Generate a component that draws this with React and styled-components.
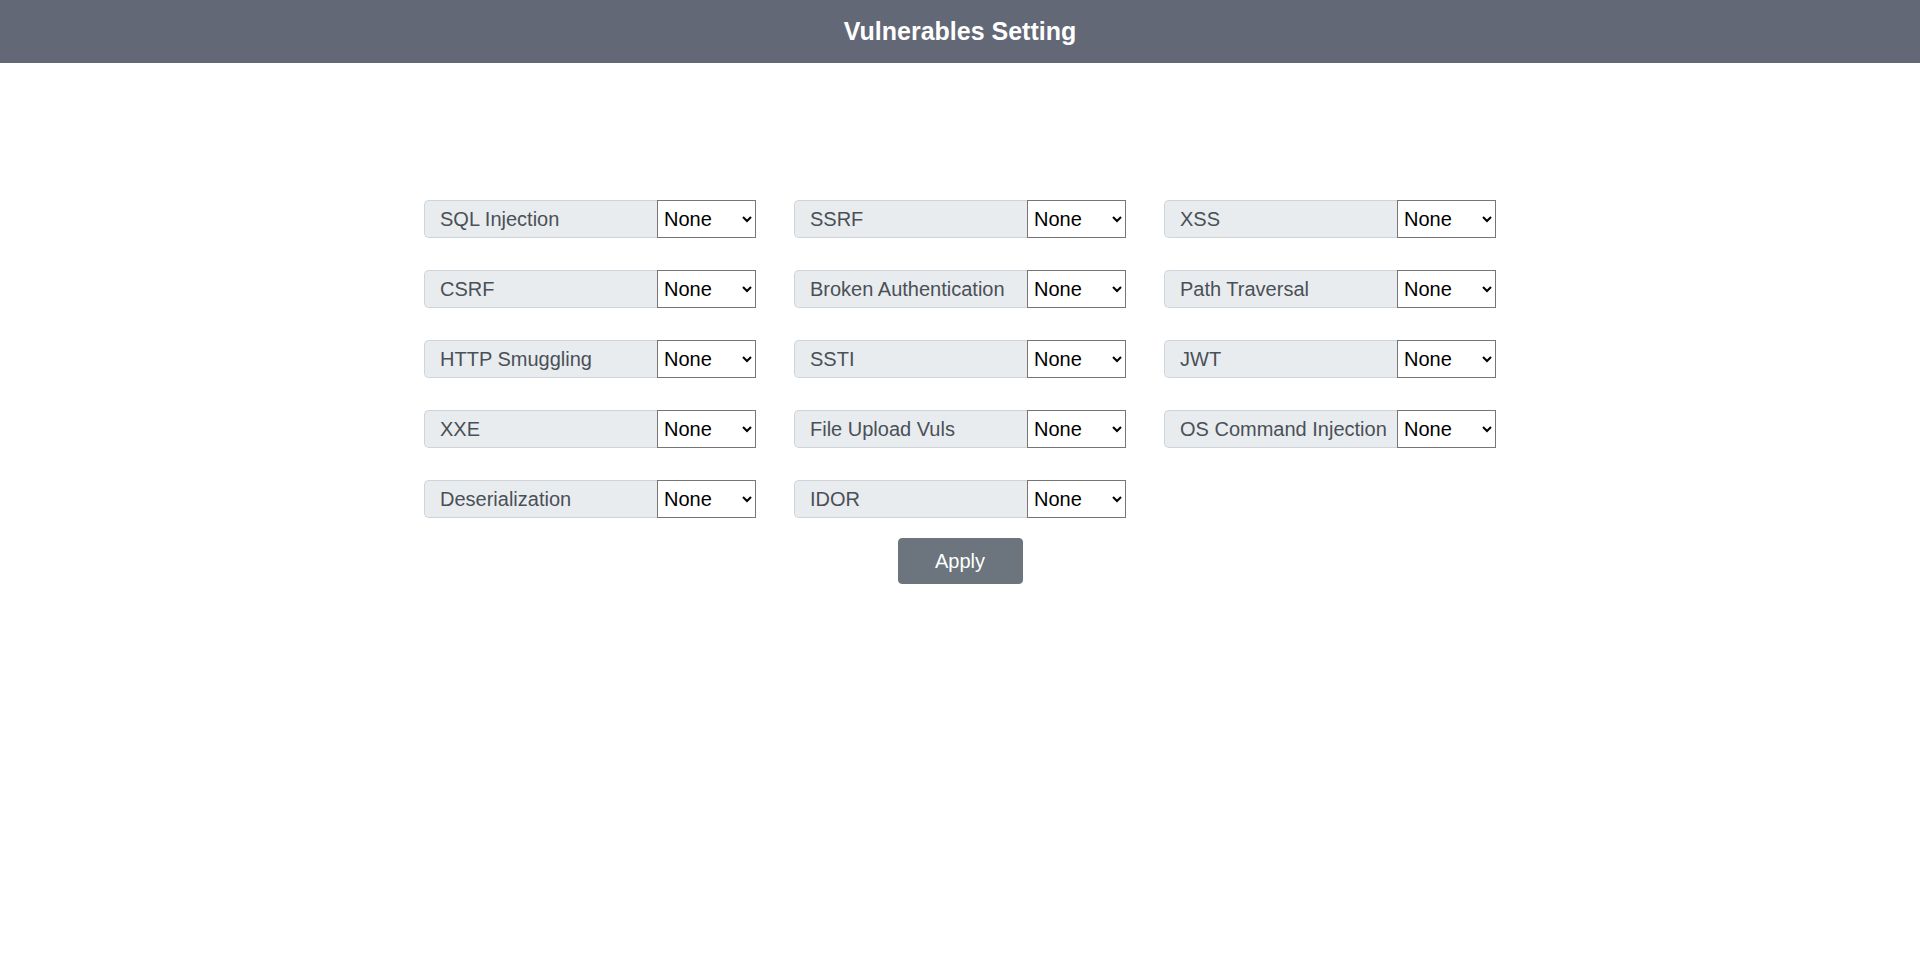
import React, { useState } from 'react';
import styled, { createGlobalStyle } from 'styled-components';

const GlobalStyle = createGlobalStyle`
    body {
        margin: 0;
        font-family: "Liberation Sans", Arial, sans-serif;
        background: #ffffff;
    }
`;

const Header = styled.header`
    height: 63px;
    background: #626876;
    display: flex;
    align-items: center;
    justify-content: center;
`;
const Title = styled.h1`
    margin: 0;
    color: #ffffff;
    font-size: 25px;
    font-weight: 700;
`;
const Main = styled.main`
    padding-top: 137px;
    display: flex;
    flex-direction: column;
    align-items: center;
`;
const Grid = styled.div`
    display: grid;
    grid-template-columns: repeat(3, 332px);
    column-gap: 38px;
    row-gap: 32px;
`;
const Group = styled.div`
    display: flex;
    height: 38px;
`;
const Label = styled.span`
    box-sizing: border-box;
    width: 233px;
    display: flex;
    align-items: center;
    padding: 0 15px;
    background: #e9ecef;
    border: 1px solid #ced4da;
    border-right: none;
    border-radius: 5px 0 0 5px;
    color: #495057;
    font-size: 20px;
    white-space: nowrap;
`;
const Select = styled.select`
    box-sizing: border-box;
    width: 99px;
    height: 38px;
    margin: 0;
    padding-left: 2px;
    font-family: "Liberation Sans", Arial, sans-serif;
    font-size: 20px;
    color: #000000;
    background: #ffffff;
    border: 1px solid #767676;
    border-radius: 0;
`;
const ApplyButton = styled.button`
    margin-top: 20px;
    width: 125px;
    height: 46px;
    background: #6c757d;
    border: 1px solid #6c757d;
    border-radius: 4px;
    color: #ffffff;
    font-family: "Liberation Sans", Arial, sans-serif;
    font-size: 20px;
    cursor: pointer;
`;

const vulns = [
    'SQL Injection', 'SSRF', 'XSS',
    'CSRF', 'Broken Authentication', 'Path Traversal',
    'HTTP Smuggling', 'SSTI', 'JWT',
    'XXE', 'File Upload Vuls', 'OS Command Injection',
    'Deserialization', 'IDOR',
];

const App = () => {
    const [levels, setLevels] = useState({});
    return (
        <>
            <GlobalStyle />
            <Header>
                <Title>Vulnerables Setting</Title>
            </Header>
            <Main>
                <Grid>
                    {vulns.map((name) => (
                        <Group key={name}>
                            <Label>{name}</Label>
                            <Select
                                value={levels[name] || 'None'}
                                onChange={(e) => setLevels({ ...levels, [name]: e.target.value })}
                            >
                                <option>None</option>
                                <option>Low</option>
                                <option>Medium</option>
                                <option>High</option>
                            </Select>
                        </Group>
                    ))}
                </Grid>
                <ApplyButton>Apply</ApplyButton>
            </Main>
        </>
    );
};

export default App;
